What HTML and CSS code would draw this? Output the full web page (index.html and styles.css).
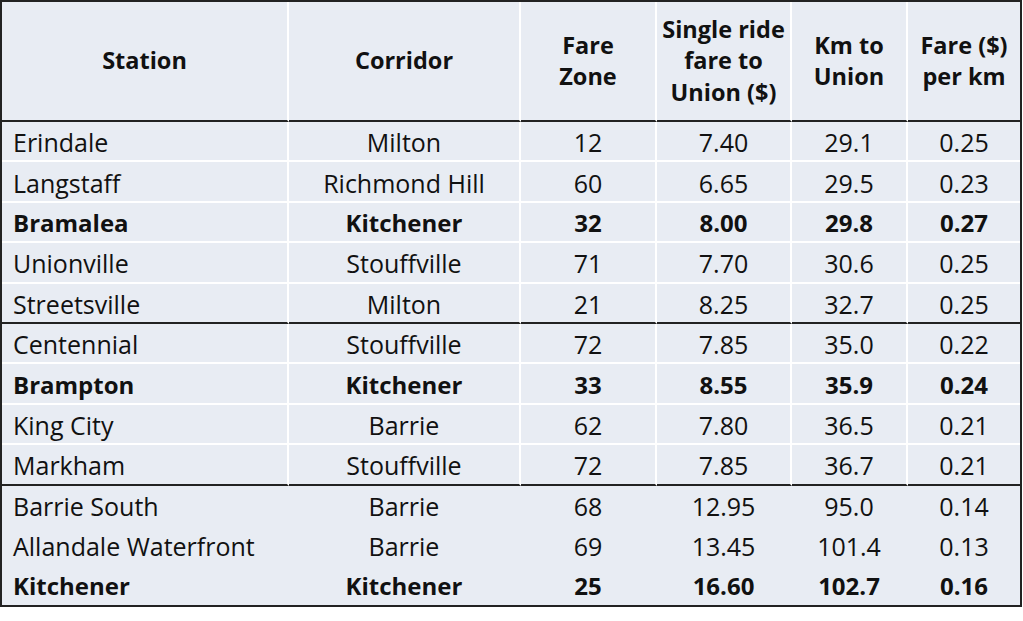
FILE: index.html
```html
<!DOCTYPE html>
<html lang="en">
<head>
<meta charset="utf-8">
<title>GO Transit fares per km</title>
<link rel="stylesheet" href="styles.css">
</head>
<body>
<table class="fares">
  <colgroup>
    <col class="c-station">
    <col class="c-corridor">
    <col class="c-zone">
    <col class="c-fare">
    <col class="c-km">
    <col class="c-perkm">
  </colgroup>
  <thead>
    <tr>
      <th>Station</th>
      <th>Corridor</th>
      <th>Fare<br>Zone</th>
      <th>Single ride<br>fare to<br>Union ($)</th>
      <th>Km to<br>Union</th>
      <th>Fare ($)<br>per km</th>
    </tr>
  </thead>
  <tbody class="group">
    <tr><td>Erindale</td><td>Milton</td><td>12</td><td>7.40</td><td>29.1</td><td>0.25</td></tr>
    <tr><td>Langstaff</td><td>Richmond Hill</td><td>60</td><td>6.65</td><td>29.5</td><td>0.23</td></tr>
    <tr class="hl"><td>Bramalea</td><td>Kitchener</td><td>32</td><td>8.00</td><td>29.8</td><td>0.27</td></tr>
    <tr><td>Unionville</td><td>Stouffville</td><td>71</td><td>7.70</td><td>30.6</td><td>0.25</td></tr>
    <tr><td>Streetsville</td><td>Milton</td><td>21</td><td>8.25</td><td>32.7</td><td>0.25</td></tr>
  </tbody>
  <tbody class="group">
    <tr><td>Centennial</td><td>Stouffville</td><td>72</td><td>7.85</td><td>35.0</td><td>0.22</td></tr>
    <tr class="hl"><td>Brampton</td><td>Kitchener</td><td>33</td><td>8.55</td><td>35.9</td><td>0.24</td></tr>
    <tr><td>King City</td><td>Barrie</td><td>62</td><td>7.80</td><td>36.5</td><td>0.21</td></tr>
    <tr><td>Markham</td><td>Stouffville</td><td>72</td><td>7.85</td><td>36.7</td><td>0.21</td></tr>
  </tbody>
  <tbody class="group plain">
    <tr><td>Barrie South</td><td>Barrie</td><td>68</td><td>12.95</td><td>95.0</td><td>0.14</td></tr>
    <tr><td>Allandale Waterfront</td><td>Barrie</td><td>69</td><td>13.45</td><td>101.4</td><td>0.13</td></tr>
    <tr class="hl"><td>Kitchener</td><td>Kitchener</td><td>25</td><td>16.60</td><td>102.7</td><td>0.16</td></tr>
  </tbody>
</table>
</body>
</html>
```

FILE: styles.css
```css
html, body {
  margin: 0;
  padding: 0;
  background: #ffffff;
}

body {
  font-family: "Open Sans", "DejaVu Sans", sans-serif;
  color: #111111;
}

.fares {
  width: 1022px;
  border-collapse: separate;
  border-spacing: 0;
  border: 2px solid #222222;
  background: #e8ecf3;
  font-size: 25px;
  table-layout: fixed;
}

.c-station { width: 287px; }
.c-corridor { width: 232px; }
.c-zone { width: 136px; }
.c-fare { width: 135px; }
.c-km { width: 116px; }
.c-perkm { width: auto; }

.fares th {
  height: 118px;
  padding: 0;
  font-size: 23.5px;
  font-weight: 700;
  line-height: 31.5px;
  text-align: center;
  vertical-align: middle;
  border-right: 2px solid #ffffff;
  border-bottom: 2px solid #222222;
}

.fares td {
  height: 36.4px;
  padding: 2px 0 0;
  line-height: 26px;
  text-align: center;
  vertical-align: middle;
  border-right: 2px solid #ffffff;
  border-bottom: 2px solid #ffffff;
}

.fares th:last-child,
.fares td:last-child {
  border-right: none;
}

.fares td:first-child {
  text-align: left;
  padding-left: 11px;
}

.fares .group tr:last-child td {
  border-bottom-color: #222222;
}

.fares .group:last-child tr:last-child td {
  border-bottom: none;
}

.fares .plain td {
  border-right-color: transparent;
  border-bottom-color: transparent;
}

.fares .hl td {
  font-size: 24px;
  font-weight: 700;
}
```
